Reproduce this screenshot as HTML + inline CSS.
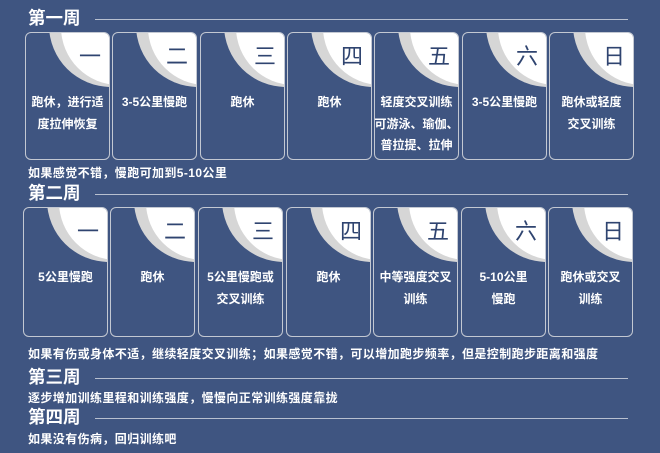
<!DOCTYPE html>
<html><head><meta charset="utf-8"><style>
*{margin:0;padding:0;box-sizing:border-box}
body{width:660px;height:453px;background:#3f5581;position:relative;overflow:hidden;font-family:"Liberation Sans","Noto Sans CJK SC",sans-serif;color:#fff}
.t{position:absolute;left:28px;font-size:17.5px;font-weight:bold;line-height:20px}
.ln{position:absolute;height:1px;background:#b8c0d0}
.n{position:absolute;left:28px;font-size:12px;font-weight:bold;line-height:14px;white-space:nowrap;letter-spacing:0.4px}
.c{position:absolute;width:85px;border:1.5px solid #c3c8d2;border-radius:6px;overflow:hidden}
.c .g{position:absolute;width:124px;height:124px;border-radius:50%;background:#d6d6d6;right:-64px;top:-70px}
.c .w{position:absolute;width:116px;height:116px;border-radius:50%;background:#fff;right:-68px;top:-64px}
.c .d{position:absolute;right:8px;top:11px;font-size:22px;color:#2f4470;line-height:26px}
.c .x{position:absolute;left:-4px;right:-4px;top:59px;text-align:center;font-size:12px;font-weight:bold;line-height:21.5px;white-space:nowrap}
</style></head><body>
<div class="t" style="top:8px">第一周</div><div class="ln" style="left:95px;width:533px;top:19px"></div>
<div class="c" style="left:25px;top:32px;height:128px"><div class="g"></div><div class="w"></div><div class="d">一</div><div class="x">跑休，进行适<br>度拉伸恢复</div></div>
<div class="c" style="left:112px;top:32px;height:128px"><div class="g"></div><div class="w"></div><div class="d">二</div><div class="x">3-5公里慢跑</div></div>
<div class="c" style="left:200px;top:32px;height:128px"><div class="g"></div><div class="w"></div><div class="d">三</div><div class="x">跑休</div></div>
<div class="c" style="left:287px;top:32px;height:128px"><div class="g"></div><div class="w"></div><div class="d">四</div><div class="x">跑休</div></div>
<div class="c" style="left:374px;top:32px;height:128px"><div class="g"></div><div class="w"></div><div class="d">五</div><div class="x">轻度交叉训练<br>可游泳、瑜伽、<br>普拉提、拉伸</div></div>
<div class="c" style="left:462px;top:32px;height:128px"><div class="g"></div><div class="w"></div><div class="d">六</div><div class="x">3-5公里慢跑</div></div>
<div class="c" style="left:549px;top:32px;height:128px"><div class="g"></div><div class="w"></div><div class="d">日</div><div class="x">跑休或轻度<br>交叉训练</div></div>
<div class="n" style="top:166px">如果感觉不错，慢跑可加到5-10公里</div>
<div class="t" style="top:183px">第二周</div><div class="ln" style="left:95px;width:533px;top:194px"></div>
<div class="c" style="left:23px;top:207px;height:130px"><div class="g"></div><div class="w"></div><div class="d">一</div><div class="x">5公里慢跑</div></div>
<div class="c" style="left:110px;top:207px;height:130px"><div class="g"></div><div class="w"></div><div class="d">二</div><div class="x">跑休</div></div>
<div class="c" style="left:198px;top:207px;height:130px"><div class="g"></div><div class="w"></div><div class="d">三</div><div class="x">5公里慢跑或<br>交叉训练</div></div>
<div class="c" style="left:286px;top:207px;height:130px"><div class="g"></div><div class="w"></div><div class="d">四</div><div class="x">跑休</div></div>
<div class="c" style="left:373px;top:207px;height:130px"><div class="g"></div><div class="w"></div><div class="d">五</div><div class="x">中等强度交叉<br>训练</div></div>
<div class="c" style="left:461px;top:207px;height:130px"><div class="g"></div><div class="w"></div><div class="d">六</div><div class="x">5-10公里<br>慢跑</div></div>
<div class="c" style="left:548px;top:207px;height:130px"><div class="g"></div><div class="w"></div><div class="d">日</div><div class="x">跑休或交叉<br>训练</div></div>
<div class="n" style="top:347px">如果有伤或身体不适，继续轻度交叉训练；如果感觉不错，可以增加跑步频率，但是控制跑步距离和强度</div>
<div class="t" style="top:367px">第三周</div><div class="ln" style="left:95px;width:533px;top:378px"></div>
<div class="n" style="top:391px">逐步增加训练里程和训练强度，慢慢向正常训练强度靠拢</div>
<div class="t" style="top:407px">第四周</div><div class="ln" style="left:95px;width:533px;top:418px"></div>
<div class="n" style="top:432px">如果没有伤病，回归训练吧</div>
</body></html>
